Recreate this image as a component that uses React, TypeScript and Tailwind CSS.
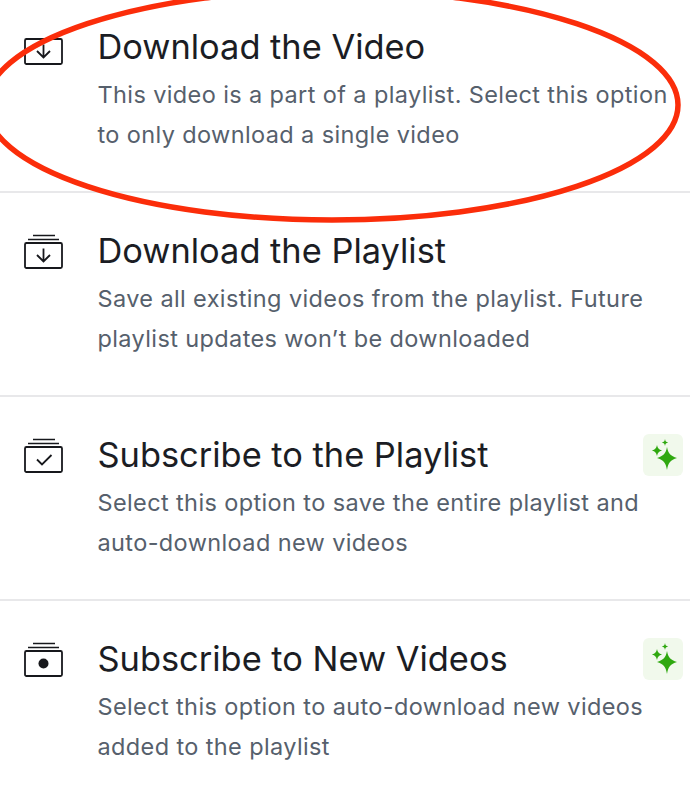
const options = [
  {
    title: "Download the Video",
    lines: ["This video is a part of a playlist. Select this option", "to only download a single video"],
    icon: "video",
    pro: false,
  },
  {
    title: "Download the Playlist",
    lines: ["Save all existing videos from the playlist. Future", "playlist updates won’t be downloaded"],
    icon: "playlist",
    pro: false,
  },
  {
    title: "Subscribe to the Playlist",
    lines: ["Select this option to save the entire playlist and", "auto-download new videos"],
    icon: "subscribe",
    pro: true,
  },
  {
    title: "Subscribe to New Videos",
    lines: ["Select this option to auto-download new videos", "added to the playlist"],
    icon: "new",
    pro: true,
  },
];

function OptionIcon({ kind }: { kind: string }) {
  const stacked = kind !== "video";
  return (
    <svg width="40" height="36" viewBox="0 0 40 36" fill="none" stroke="#17181c" strokeWidth="1.8" className="shrink-0">
      {stacked && (
        <>
          <path d="M9 1.5h22" strokeWidth="1.5" />
          <path d="M4 5.5h31" strokeWidth="1.5" />
        </>
      )}
      <rect x="1" y="9" width="37" height="25" rx="1.5" />
      {(kind === "video" || kind === "playlist") && (
        <path d="M19.500 14.500v13M13 21l6.500 6.500L26 21" />
      )}
      {kind === "subscribe" && <path d="M13 21.500l5 5 9.500-9.500" />}
      {kind === "new" && <circle cx="19.500" cy="21.500" r="5" fill="#17181c" stroke="none" />}
    </svg>
  );
}

function SparkBadge() {
  return (
    <div className="w-10 h-[42px] rounded-md bg-[#f1f9ec] flex items-center justify-center shrink-0">
      <svg width="32" height="34" viewBox="0 0 32 34" fill="#2fa80f">
        <path d="M20 9c1.200 6.500 3.500 9 10 11-6.500 2-8.800 4.500-10 12-1.200-7.500-3.500-10-10-12 6.500-2 8.800-4.500 10-11z" />
        <path d="M10 7c.6 3.200 1.700 4.400 5 5.500-3.300 1.100-4.400 2.300-5 5.500-.6-3.200-1.700-4.400-5-5.500 3.300-1.100 4.400-2.300 5-5.500z" />
        <path d="M18 1c.4 2.200 1 3 3.200 3.500-2.200.5-2.800 1.300-3.200 3.500-.4-2.200-1-3-3.200-3.500 2.200-.5 2.800-1.300 3.200-3.500z" />
      </svg>
    </div>
  );
}

export default function App() {
  return (
    <div className="relative w-[690px] h-[800px] overflow-hidden bg-white font-['Inter',sans-serif]">
      <div className="-mt-[11px]">
        {options.map((o) => (
          <div key={o.title} className="relative h-[204px] border-b-2 border-[#e8e8ea] flex pl-6 pr-[7px] pt-[36.500px]">
            <div className="w-[73.500px] pt-[4.500px]">
              <OptionIcon kind={o.icon} />
            </div>
            <div className="flex-1 min-w-0">
              <div className="text-[34.400px] leading-[42px] text-[#1b1d24] whitespace-nowrap">{o.title}</div>
              <div className="mt-[7px] text-[23.500px] leading-[40px] text-[#56606c] tracking-[0.38px] whitespace-nowrap">
                {o.lines.map((l) => (
                  <div key={l}>{l}</div>
                ))}
              </div>
            </div>
            {o.pro && <SparkBadge />}
          </div>
        ))}
      </div>
      <svg className="absolute left-0 top-0 pointer-events-none" width="690" height="800" fill="none">
        <ellipse cx="332" cy="105" rx="346" ry="115" stroke="#fb2d0a" strokeWidth="5.500" />
      </svg>
    </div>
  );
}
